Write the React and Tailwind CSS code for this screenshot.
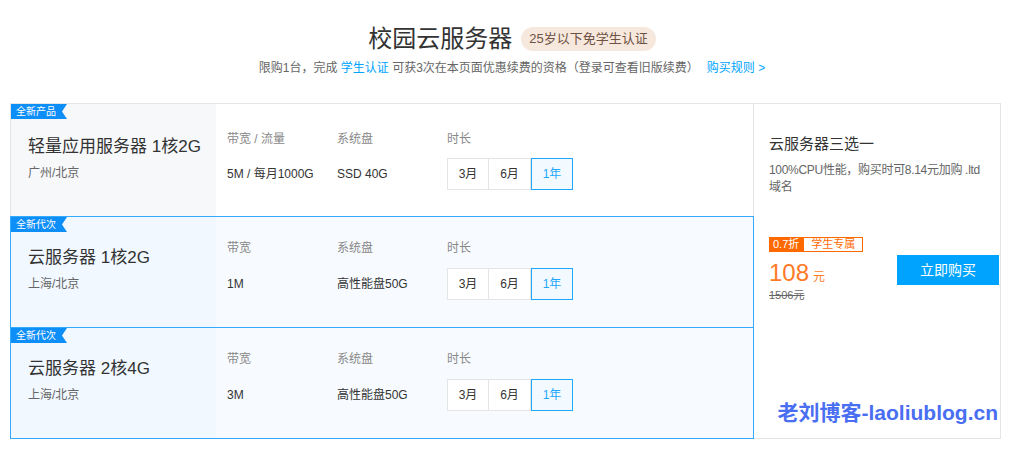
import React from "react";

const font = { fontFamily: '"Liberation Sans", "Noto Sans CJK SC", sans-serif' };

const products = [
  {
    tag: "全新产品",
    name: "轻量应用服务器 1核2G",
    region: "广州/北京",
    bwLabel: "带宽 / 流量",
    bw: "5M / 每月1000G",
    disk: "SSD 40G",
    active: false,
  },
  {
    tag: "全新代次",
    name: "云服务器 1核2G",
    region: "上海/北京",
    bwLabel: "带宽",
    bw: "1M",
    disk: "高性能盘50G",
    active: true,
  },
  {
    tag: "全新代次",
    name: "云服务器 2核4G",
    region: "上海/北京",
    bwLabel: "带宽",
    bw: "3M",
    disk: "高性能盘50G",
    active: true,
  },
];

const ProductRow = ({ p }) => (
  <div
    className={
      "relative flex border " +
      (p.active
        ? "h-[112px] border-[#33aaff] bg-[#f7fbff] -mt-px z-10"
        : "h-[114px] border-[#e5e5e5] bg-white")
    }
  >
    <span className="absolute left-0 top-0 h-[15px] pl-[5px] pr-[11px] bg-[#0e8ef7] text-white text-[10px] leading-[15px] [clip-path:polygon(0_0,100%_0,calc(100%-5px)_50%,100%_100%,0_100%)]">
      {p.tag}
    </span>
    <div
      className={
        "w-[205px] flex flex-col pl-[17px] " +
        (p.active ? "bg-[#f1f8ff] pt-[29px]" : "bg-[#f7f8fa] pt-[31px]")
      }
    >
      <div className="text-[17px] leading-[24px] text-[#333]">{p.name}</div>
      <div className="text-[12px] leading-[18px] text-[#666] mt-[5px]">{p.region}</div>
    </div>
    <div className={"flex pl-[11px] " + (p.active ? "pt-[22px]" : "pt-[26px]")}>
      <div className="w-[110px]">
        <div className="text-[12px] leading-[18px] text-[#888]">{p.bwLabel}</div>
        <div className={"h-8 flex items-center text-[12px] text-[#333] " + (p.active ? "mt-[11px]" : "mt-[10px]")}>{p.bw}</div>
      </div>
      <div className="w-[110px]">
        <div className="text-[12px] leading-[18px] text-[#888]">系统盘</div>
        <div className={"h-8 flex items-center text-[12px] text-[#333] " + (p.active ? "mt-[11px]" : "mt-[10px]")}>{p.disk}</div>
      </div>
      <div>
        <div className="text-[12px] leading-[18px] text-[#888]">时长</div>
        <div className={"flex " + (p.active ? "mt-[11px]" : "mt-[10px]")}>
          <span className="w-[42px] h-8 flex items-center justify-center border border-[#e5e5e5] bg-white text-[12px] text-[#333]">3月</span>
          <span className="w-[42px] h-8 flex items-center justify-center border border-l-0 border-[#e5e5e5] bg-white text-[12px] text-[#333]">6月</span>
          <span className="w-[42px] h-8 flex items-center justify-center border border-[#1ea7fd] bg-[#f2f9ff] text-[12px] text-[#1ea7fd]">1年</span>
        </div>
      </div>
    </div>
  </div>
);

export default function App() {
  return (
    <div className="w-[1024px] h-[450px] bg-white overflow-hidden" style={font}>
      <div className="pt-[23px] flex items-center justify-center gap-[9px]">
        <h1 className="text-[24px] leading-[32px] text-[#333]">校园云服务器</h1>
        <span className="h-[24px] px-[8px] rounded-full bg-[#f7e8de] text-[13px] leading-[24px] text-[#6e5244]">
          25岁以下免学生认证
        </span>
      </div>
      <p className="mt-[4px] text-center text-[12px] leading-[18px] text-[#666]">
        限购1台，完成 <span className="text-[#00a4ff]">学生认证</span> 可获3次在本页面优惠续费的资格（登录可查看旧版续费）
        <span className="ml-[8px] text-[#00a4ff]">购买规则 &gt;</span>
      </p>

      <div className="mt-[26px] ml-[10px] w-[991px] h-[336px] flex">
        <div className="w-[744px] flex flex-col">
          {products.map((p, i) => (
            <ProductRow key={i} p={p} />
          ))}
        </div>
        <div className="flex-1 -ml-px border border-[#e5e5e5] flex flex-col pl-[15px] pr-[1px] pt-[29px] pb-[13px]">
          <div className="text-[15px] leading-[22px] text-[#333]">云服务器三选一</div>
          <div className="mt-[7px] text-[12px] leading-[17px] text-[#666] tracking-[-0.3px] whitespace-nowrap">
            100%CPU性能，购买时可8.14元加购 .ltd
            <br />
            域名
          </div>
          <div className="mt-[41px] flex items-start justify-between">
            <div>
              <div className="flex h-[15px] text-[11px] leading-[13px]">
                <span className="px-[3px] bg-[#ff6a00] text-white border border-[#ff6a00]">0.7折</span>
                <span className="px-[7px] border border-[#ff6a00] text-[#ff6a00]">学生专属</span>
              </div>
              <div className="mt-[6px] flex items-baseline text-[#ff7a26]">
                <span className="text-[24px] leading-[30px]">108</span>
                <span className="ml-[4px] text-[12px]">元</span>
              </div>
              <div className="text-[11px] leading-[14px] text-[#666] line-through">1506元</div>
            </div>
            <button className="mt-[18px] w-[102px] h-[30px] bg-[#00a4ff] text-white text-[14px]">立即购买</button>
          </div>
          <div className="mt-auto text-right pr-[1px] text-[21px] leading-[24px] font-bold text-[#4a6ef2]">
            老刘博客-laoliublog.cn
          </div>
        </div>
      </div>
    </div>
  );
}
